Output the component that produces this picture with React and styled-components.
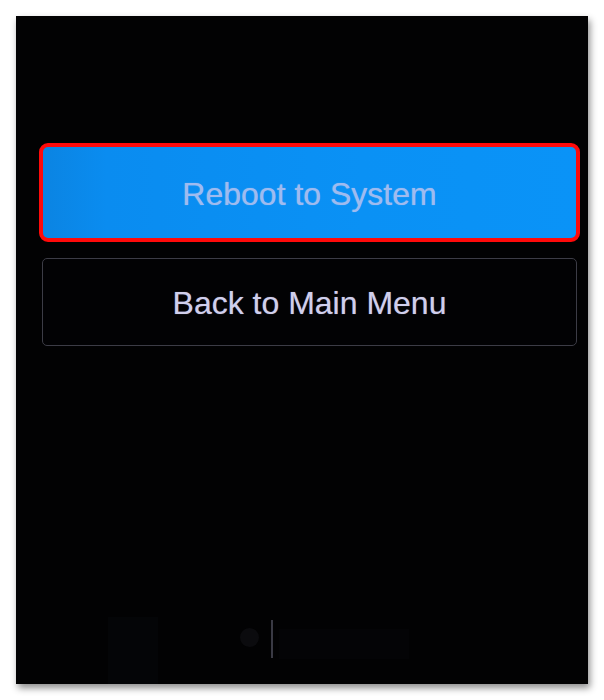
import React from "react";
import styled, { createGlobalStyle } from "styled-components";

const GlobalStyle = createGlobalStyle`
  html, body {
    margin: 0;
    padding: 0;
    background: #ffffff;
  }
  body {
    font-family: "Liberation Sans", Arial, sans-serif;
  }
`;

const Page = styled.div`
  width: 604px;
  height: 700px;
  padding: 16px 0 0 16px;
  box-sizing: border-box;
  background: #fff;
`;

const Screen = styled.div`
  width: 572px;
  height: 668px;
  box-sizing: border-box;
  background: #020203;
  box-shadow: 2px 4px 7px rgba(0, 0, 0, 0.45);
  display: flex;
  flex-direction: column;
  padding: 130px 11px 0 26px;
`;

const Menu = styled.div`
  display: flex;
  flex-direction: column;
  gap: 19px;
`;

const MenuButton = styled.button`
  display: flex;
  align-items: center;
  justify-content: center;
  width: 535px;
  height: ${(p) => (p.$primary ? 93 : 88)}px;
  margin: 0;
  padding: 3px 0 0;
  box-sizing: border-box;
  font-family: "Liberation Sans", Arial, sans-serif;
  font-size: 32px;
  font-weight: 400;
  cursor: pointer;
  border-radius: ${(p) => (p.$primary ? 6 : 5)}px;
  color: ${(p) => (p.$primary ? "#9fbbef" : "#d0cfed")};
  background: ${(p) =>
    p.$primary
      ? "linear-gradient(90deg, #0b84e2 0%, #0a8cf0 12%, #0a91f5 60%, #0a93f7 100%)"
      : "#020204"};
  border: ${(p) => (p.$primary ? "none" : "1.5px solid #3c3c46")};
  outline: ${(p) => (p.$selected ? "4px solid #ff0a0a" : "none")};
  outline-offset: -1px;
  text-shadow: ${(p) =>
    p.$primary
      ? "0 0 1px rgba(170, 200, 250, 0.7)"
      : "0 0 1px rgba(210, 210, 240, 0.5)"};
`;

const NavBar = styled.div`
  margin-top: auto;
  height: 67px;
  display: flex;
  align-items: flex-start;
  padding-left: 66px;
`;

const DimBlock = styled.div`
  width: 50px;
  height: 67px;
  background: #040507;
`;

const HomeDot = styled.div`
  width: 19px;
  height: 19px;
  margin: 11px 0 0 82px;
  border-radius: 50%;
  background: #0b0b0e;
`;

const Divider = styled.div`
  width: 2px;
  height: 38px;
  margin: 3px 0 0 12px;
  background: #3a3a44;
`;

const BackHint = styled.div`
  width: 130px;
  height: 30px;
  margin: 12px 0 0 6px;
  background: #040406;
`;

export default function App() {
  return (
    <>
      <GlobalStyle />
      <Page>
        <Screen>
          <Menu>
            <MenuButton $primary $selected>
              Reboot to System
            </MenuButton>
            <MenuButton>Back to Main Menu</MenuButton>
          </Menu>
          <NavBar>
            <DimBlock />
            <HomeDot />
            <Divider />
            <BackHint />
          </NavBar>
        </Screen>
      </Page>
    </>
  );
}
